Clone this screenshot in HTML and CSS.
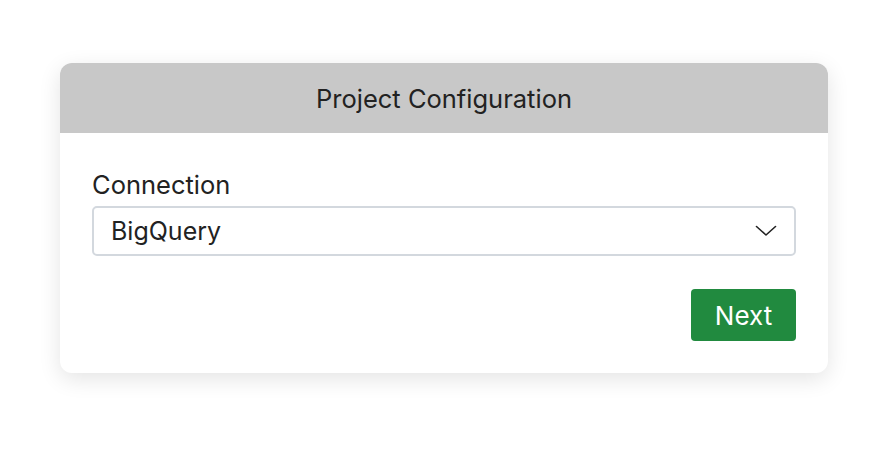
FILE: index.html
```html
<!DOCTYPE html>
<html>
<head>
<meta charset="utf-8">
<link rel="stylesheet" href="styles.css">
</head>
<body>
<div class="card">
  <div class="card-header">Project Configuration</div>
  <div class="card-body">
    <label class="field-label" for="conn">Connection</label>
    <div class="select">
      <span class="select-value">BigQuery</span>
      <svg class="chevron" width="22" height="12" viewBox="0 0 22 12"><path d="M1.5 1.5 L11 10 L20.5 1.5" fill="none" stroke="#222" stroke-width="1.6" stroke-linecap="round" stroke-linejoin="round"/></svg>
    </div>
    <div class="actions">
      <button class="btn-next">Next</button>
    </div>
  </div>
</div>
</body>
</html>
```
FILE: styles.css
```css
html, body {
  margin: 0;
  background: #ffffff;
  min-height: 454px;
}
body {
  padding: 63px 50px 0 60px;
  box-sizing: border-box;
  font-family: Inter, "Noto Sans", "Liberation Sans", sans-serif;
  color: #222;
}
.card {
  width: 768px;
  border-radius: 12px;
  background: #fff;
  box-shadow: 0 6px 22px rgba(0, 0, 0, 0.11);
  overflow: hidden;
}
.card-header {
  height: 70px;
  background: #c8c8c8;
  display: flex;
  align-items: center;
  justify-content: center;
  font-size: 25.5px;
  color: #222;
}
.card-body {
  padding: 36px 32px 32px 32px;
  display: flex;
  flex-direction: column;
}
.field-label {
  font-size: 25.5px;
  line-height: 32px;
  margin-bottom: 5px;
  color: #222;
}
.select {
  height: 50px;
  box-sizing: border-box;
  border: 2px solid #d3d8de;
  border-radius: 5px;
  display: flex;
  align-items: center;
  justify-content: space-between;
  padding: 0 17px 0 17px;
}
.select-value {
  font-size: 25px;
  color: #222;
}
.chevron {
  display: block;
}
.actions {
  display: flex;
  justify-content: flex-end;
  margin-top: 33px;
}
.btn-next {
  width: 105px;
  height: 52px;
  border: none;
  border-radius: 4px;
  background: #218a3f;
  color: #fff;
  font-family: Inter, "Noto Sans", "Liberation Sans", sans-serif;
  font-size: 26px;
  padding: 0;
}
```
